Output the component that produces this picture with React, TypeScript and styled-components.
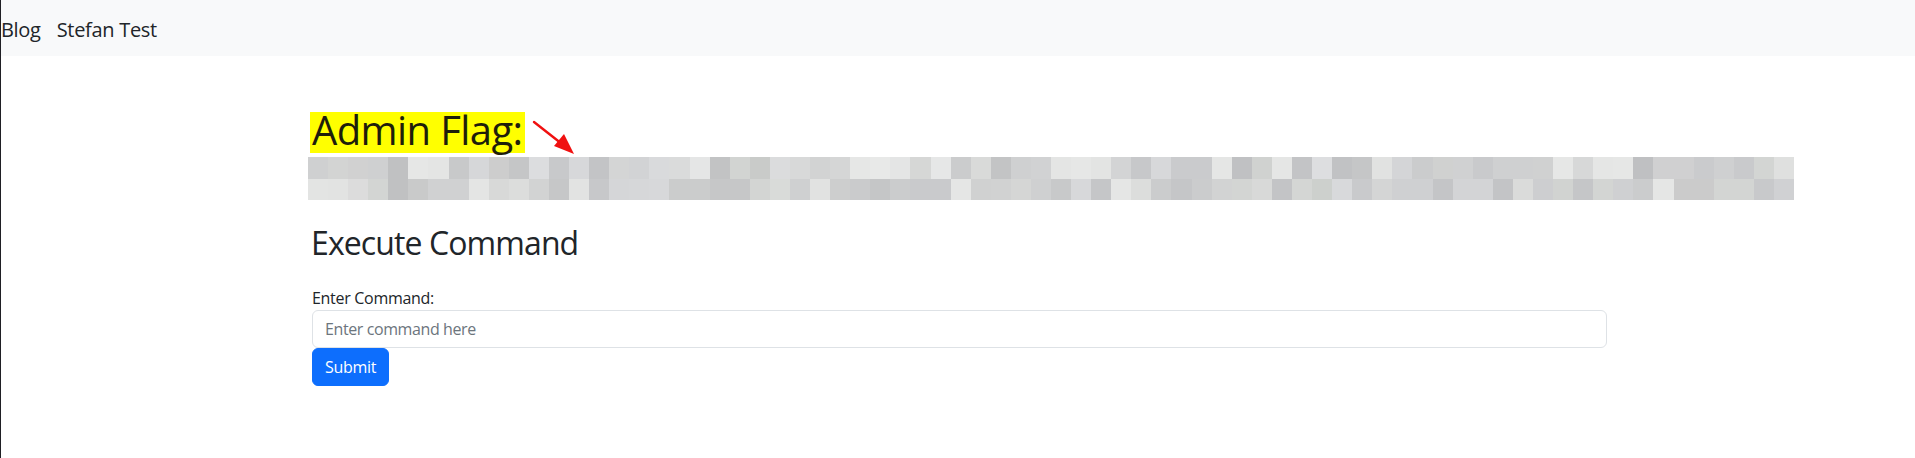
import React from "react";
import styled, { createGlobalStyle } from "styled-components";

const GlobalStyle = createGlobalStyle`
  html, body { margin: 0; padding: 0; background: #ffffff; }
  body {
    font-family: "Open Sans", "Noto Sans", sans-serif;
    color: #212529;
    font-size: 16px;
    line-height: 1.5;
  }
  * { box-sizing: border-box; }
`;

const Page = styled.div`
  min-height: 100vh;
  border-left: 1px solid #1f1f24;
`;

const Navbar = styled.nav`
  height: 56px;
  background: #f8f9fa;
  display: flex;
  align-items: center;
  padding-top: 4px;
  gap: 16px;
`;

const NavBrand = styled.a`
  font-size: 20px;
  line-height: 30px;
  letter-spacing: -0.3px;
  color: #212529;
  text-decoration: none;
  white-space: nowrap;
`;

const Container = styled.main`
  width: 1296px;
  margin: 0 auto;
`;

const FlagRow = styled.div`
  display: flex;
  align-items: flex-start;
  margin-top: 56px;
`;

const Highlight = styled.h1`
  margin: 0;
  display: inline-block;
  background: #ffff00;
  color: #1e1e0a;
  font-size: 40px;
  font-weight: 400;
  line-height: 35px;
  padding: 0 3px 6px 2px;
  letter-spacing: -0.6px;
  white-space: nowrap;
`;

const ArrowIcon = styled.svg`
  flex: none;
  margin-top: 8px;
  margin-left: 7px;
`;

const PixelBand = styled.div`
  margin-top: 1px;
  margin-left: -2px;
  width: 1486px;
  height: 43px;
  display: grid;
  grid-template-columns: repeat(74, 1fr);
  grid-template-rows: 22px 21px;
`;

const Pixel = styled.div<{ $c: string }>`
  background: ${(p) => p.$c};
`;

const SectionTitle = styled.h2`
  margin: 24px 0 0 0;
  font-size: 32px;
  font-weight: 400;
  line-height: 38px;
  letter-spacing: -0.9px;
  padding-left: 1px;
`;

const CommandForm = styled.form`
  margin-top: 24px;
  padding-left: 2px;
  display: flex;
  flex-direction: column;
  align-items: flex-start;
`;

const Label = styled.label`
  font-size: 16px;
  line-height: 24px;
  letter-spacing: -0.3px;
`;

const Input = styled.input`
  width: 1295px;
  height: 38px;
  padding: 6px 12px;
  font-family: inherit;
  font-size: 16px;
  line-height: 24px;
  letter-spacing: -0.4px;
  color: #212529;
  background: #fff;
  border: 1px solid #dee2e6;
  border-radius: 6px;
  outline: none;
  &::placeholder { color: #6c757d; }
`;

const SubmitButton = styled.button`
  height: 38px;
  padding: 6px 12px;
  font-family: inherit;
  font-size: 16px;
  line-height: 24px;
  letter-spacing: -0.3px;
  color: #fff;
  background: #0d6efd;
  border: 1px solid #0d6efd;
  border-radius: 6px;
  cursor: pointer;
`;

const row1 = [
  "#cfd0d1","#d3d4d3","#d1d1d1","#cfd0d1","#c0c1c2","#e6e7e6","#e4e5e4","#c8c9ca","#d6d7d9","#cdcdcd",
  "#c5c6c7","#dcdddf","#c8c9cb","#d7d8da","#c3c4c6","#d4d5d5","#d2d3d5","#d9dadc","#dadbdb","#e5e6e6",
  "#c2c3c4","#d2d4d2","#c9cbc9","#dbdcdd","#d8d9d9","#d2d3d3","#d5d6d6","#e6e7e6","#e8e9e8","#e4e5e5",
  "#d6d7d6","#e6e7e7","#cbcccd","#d9dad9","#c3c4c5","#cfd0d1","#d1d2d3",
  "#e4e5e4","#e6e7e6","#e3e4e3","#d3d4d5","#c7c8ca","#d7d8da","#cacbcd","#cacbcd","#e5e6e5","#c0c1c3",
  "#d0d2d0","#e5e6e5","#c3c4c6","#dddee0","#c1c2c4","#c5c6c7","#e1e2e1","#d4d5d7","#cbcccd","#d0d1d0",
  "#d0d1d2","#c9cacc","#cfd0d1","#cfd0d1","#d0d1d1","#e6e7e6","#d7d8d8","#e5e6e5","#e6e7e6","#bfc0c2",
  "#d0d0d1","#d0d0d1","#cacbcd","#cfd0d1","#c9cacc","#d3d5d3","#dfe0df",
];

const row2 = [
  "#e3e4e3","#e2e3e2","#dcdcdc","#d3d5d3","#c0c1c2","#c9caca","#d0d1d2","#d0d1d2","#e4e5e4","#d8d9d8",
  "#dcdddc","#d2d3d3","#c6c7c8","#e2e3e2","#c7c8ca","#d5d6d8","#d6d7d9","#d7d8da","#cbcccc","#cbcccc",
  "#c6c7c8","#c6c7c8","#d3d5d3","#d9dbd9","#cfd0d1","#e1e2e1","#cdcece","#cacbcc","#c5c6c7","#cbcccd",
  "#c9cacc","#c9cacc","#e5e6e5","#d0d1d1","#d1d2d2","#d5d6d5","#cfd0d1",
  "#c8c9ca","#d7d8da","#c5c6c8","#e5e6e5","#dcdddc","#cbcccd","#c5c6c8","#cbcccd","#d2d3d3","#d3d5d3",
  "#d8d9d8","#c3c4c6","#d4d6d4","#cdd0cd","#d8d9db","#c9cacc","#d4d5d5","#cfd0d2","#cfd0d2","#c4c5c7",
  "#d3d4d6","#d3d4d6","#c3c4c6","#dadbda","#cdced0","#d1d3d1","#c5c6c8","#d3d5d3","#cfd0d2","#cbcccd",
  "#e5e6e5","#cbcbcb","#cbcbcb","#d3d5d3","#d3d5d3","#c8c9cb","#d0d1d3",
];

export default function App() {
  return (
    <>
      <GlobalStyle />
      <Page>
        <Navbar>
          <NavBrand href="#">Blog</NavBrand>
          <NavBrand href="#">Stefan Test</NavBrand>
        </Navbar>
        <Container>
          <FlagRow>
            <Highlight>Admin Flag:</Highlight>
            <ArrowIcon width="44" height="36" viewBox="0 0 44 36">
              <line x1="2" y1="2" x2="30" y2="24" stroke="#f01010" strokeWidth="2.4" strokeLinecap="round" />
              <polygon points="42,34 22,26 32,14" fill="#f01010" />
            </ArrowIcon>
          </FlagRow>
          <PixelBand>
            {row1.map((c, i) => (
              <Pixel key={"a" + i} $c={c} />
            ))}
            {row2.map((c, i) => (
              <Pixel key={"b" + i} $c={c} />
            ))}
          </PixelBand>
          <SectionTitle>Execute Command</SectionTitle>
          <CommandForm onSubmit={(e) => e.preventDefault()}>
            <Label htmlFor="cmd">Enter Command:</Label>
            <Input id="cmd" type="text" placeholder="Enter command here" />
            <SubmitButton type="submit">Submit</SubmitButton>
          </CommandForm>
        </Container>
      </Page>
    </>
  );
}
